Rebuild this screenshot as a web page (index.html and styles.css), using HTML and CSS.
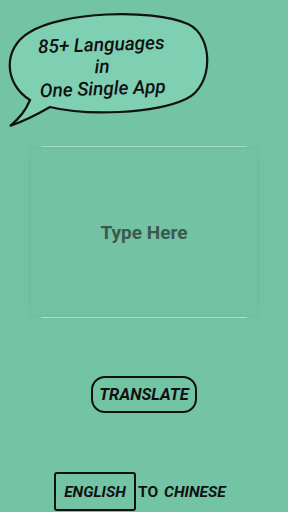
FILE: index.html
```html
<!DOCTYPE html>
<html lang="en">
<head>
    <meta charset="UTF-8">
    <title>Translator</title>
    <link rel="stylesheet" href="styles.css">
</head>
<body>
    <div class="bubble">
        <svg class="bubble-shape" width="220" height="130" viewBox="0 0 220 130">
            <path d="M30 100 C4 84 2 48 30 32 C62 12 150 8 188 24 C214 36 214 86 186 99 C154 114 86 116 50 107 C38 114 24 121 10 126 C20 118 26 110 30 100 Z"
                  fill="#7fd0b3" stroke="#111" stroke-width="2.2"/>
        </svg>
        <div class="bubble-text">
            <span>85+ Languages</span>
            <span>in</span>
            <span>One Single App</span>
        </div>
    </div>

    <div class="input-area">
        <div class="line"></div>
        <div class="card">Type Here</div>
        <div class="line"></div>
    </div>

    <div class="actions">
        <button class="translate">TRANSLATE</button>
    </div>

    <div class="langs">
        <span class="from">ENGLISH</span>
        <span class="to">TO</span>
        <span class="target">CHINESE</span>
    </div>
</body>
</html>
```

FILE: styles.css
```css
html {
    background-color: #72c4a5;
}

body {
    margin: 0;
    width: 288px;
    height: 512px;
    overflow: hidden;
    font-family: Roboto, "Liberation Sans", sans-serif;
    color: #111;
}

.bubble {
    position: relative;
    width: 220px;
    height: 130px;
}

.bubble-shape {
    position: absolute;
    left: 0;
    top: 0;
}

.bubble-text {
    position: absolute;
    left: 17px;
    top: 34px;
    width: 170px;
    display: flex;
    flex-direction: column;
    align-items: center;
    font-size: 19px;
    font-weight: 500;
    font-style: italic;
    line-height: 22px;
    transform: rotate(-2deg);
}

.input-area {
    margin-top: 16px;
    display: flex;
    flex-direction: column;
    align-items: center;
}

.line {
    width: 206px;
    height: 1px;
    background-color: #a9e0cb;
}

.card {
    width: 226px;
    height: 166px;
    margin: 2px 0;
    display: flex;
    align-items: center;
    justify-content: center;
    background-color: #72c2a3;
    box-shadow: 0 0 6px rgba(80, 150, 120, 0.25);
    border-radius: 6px;
    font-size: 19px;
    font-weight: bold;
    color: #3b5a4f;
}

.actions {
    margin-top: 58px;
    display: flex;
    justify-content: center;
}

.translate {
    width: 106px;
    height: 37px;
    border: 2px solid #111;
    border-radius: 14px;
    background-color: #72c4a5;
    font-family: Roboto, "Liberation Sans", sans-serif;
    font-size: 16.5px;
    font-weight: bold;
    font-style: italic;
    color: #111;
    padding: 0;
}

.langs {
    margin-top: 59px;
    margin-left: 54px;
    display: flex;
    align-items: center;
    font-size: 15.5px;
    font-weight: bold;
}

.from {
    width: 78px;
    height: 35px;
    border: 2px solid #111;
    border-radius: 3px;
    display: flex;
    align-items: center;
    justify-content: center;
    font-style: italic;
}

.to {
    margin-left: 2px;
}

.target {
    margin-left: 6px;
    font-style: italic;
}
```
